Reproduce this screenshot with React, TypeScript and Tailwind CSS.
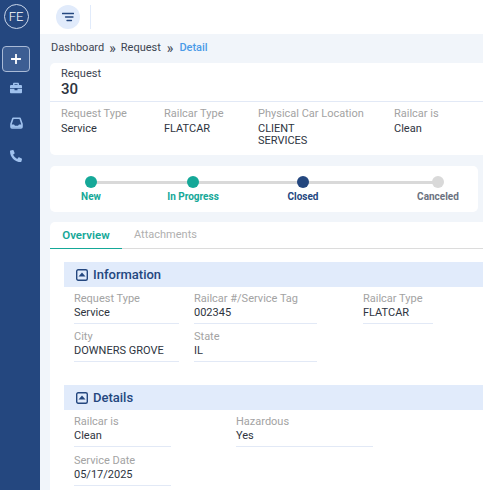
import React from 'react';
import { FaBriefcase, FaPhoneAlt } from 'react-icons/fa';

const font = { fontFamily: 'Roboto, sans-serif' };

const CollapseIcon = () => (
  <svg width="12" height="12" viewBox="0 0 12 12" className="shrink-0">
    <rect x="0.7" y="0.7" width="10.6" height="10.6" rx="1.5" fill="none" stroke="#24477f" strokeWidth="1.4" />
    <path d="M2.5 7.6 L6 3.4 L9.5 7.6 Z" fill="#24477f" />
  </svg>
);

const InboxIcon = () => (
  <svg width="13" height="12" viewBox="0 0 13 12" className="mt-[23px] shrink-0">
    <path d="M3 1.2 H10 L12 7 V10 Q12 11 11 11 H2 Q1 11 1 10 V7 Z" fill="none" stroke="#9fc1ee" strokeWidth="1.6" strokeLinejoin="round" />
    <path d="M1 7.4 H4 L5 8.8 H8 L9 7.4 H12 V10.6 H1 Z" fill="#9fc1ee" />
  </svg>
);

const Field = ({ label, value, className }: { label: string; value: string; className: string }) => (
  <div className={`border-b border-[#e2e9f6] ${className}`}>
    <div className="text-[11px] leading-[13px] text-[#a3a3a3] whitespace-nowrap">{label}</div>
    <div className="text-[11px] leading-[15px] text-[#2e3440] whitespace-nowrap">{value}</div>
  </div>
);

const SummaryField = ({ label, children, className }: { label: string; children: React.ReactNode; className: string }) => (
  <div className={className}>
    <div className="text-[11px] leading-[14px] text-[#a3a3a3] whitespace-nowrap">{label}</div>
    <div className="text-[11px] leading-[12px] mt-[2px] text-[#2e3440]">{children}</div>
  </div>
);

const SectionBar = ({ title }: { title: string }) => (
  <div className="h-[25px] bg-[#e1ebfb] pl-[12px] flex items-center gap-[5px]">
    <CollapseIcon />
    <span className="text-[13px] font-medium text-[#24477f]">{title}</span>
  </div>
);

const steps = [
  { label: 'New', dot: 'bg-[#15a898]', text: 'text-[#15a898]', gap: 'ml-0' },
  { label: 'In Progress', dot: 'bg-[#15a898]', text: 'text-[#15a898]', gap: 'ml-[62px]' },
  { label: 'Closed', dot: 'bg-[#24477f]', text: 'text-[#24477f]', gap: 'ml-[70px]' },
  { label: 'Canceled', dot: 'bg-[#d9d9d9]', text: 'text-[#6b7280]', gap: 'ml-[95px]' },
];

export default function App() {
  return (
    <div className="w-[483px] h-[490px] overflow-hidden flex bg-[#f1f5fa]" style={font}>
      {/* Sidebar */}
      <aside className="w-[40px] shrink-0 bg-[#24477f] flex flex-col items-center pt-[4px] pr-[8px]">
        <div className="w-[25px] h-[25px] shrink-0 rounded-full border border-[#c9d6ea] text-white text-[13px] font-light flex items-center justify-center">FE</div>
        <div className="mt-[17px] w-[28px] h-[26px] shrink-0 rounded-[4px] border border-[#a9bad6] bg-[#3d5e93] flex items-center justify-center">
          <svg width="10" height="10" viewBox="0 0 10 10"><path d="M5 0.5 V9.5 M0.5 5 H9.5" stroke="#fff" strokeWidth="1.8" strokeLinecap="round" /></svg>
        </div>
        <FaBriefcase className="mt-[10px] text-[#9fc1ee]" size={12} />
        <InboxIcon />
        <FaPhoneAlt className="mt-[21px] text-[#9fc1ee]" size={12} />
      </aside>

      <main className="flex-1 min-w-0 flex flex-col">
        {/* Top bar */}
        <header className="h-[34px] shrink-0 bg-white flex items-center pl-[16px]">
          <div className="w-[24px] h-[24px] rounded-full bg-[#e1ebfb] flex items-center justify-center">
            <svg width="12" height="10" viewBox="0 0 12 10"><path d="M0.5 1.5 H11.5 M3.5 5 H11 M5 8.5 H9.5" stroke="#24477f" strokeWidth="1.3" strokeLinecap="round" /></svg>
          </div>
          <div className="ml-[10px] w-px h-[24px] bg-[#e1ebfb]" />
        </header>

        {/* Breadcrumb */}
        <nav className="h-[29px] shrink-0 pl-[11px] flex items-center gap-[5px] text-[11px] text-[#3d4552]">
          <span>Dashboard</span>
          <span className="text-[14px] leading-none -translate-y-[1px]">»</span>
          <span>Request</span>
          <span className="ml-[1px] text-[14px] leading-none -translate-y-[1px]">»</span>
          <span className="ml-[1px] font-medium text-[#4a9be8]">Detail</span>
        </nav>

        {/* Request summary */}
        <section className="ml-[10px] h-[92px] shrink-0 bg-white rounded-l-[5px]">
          <div className="h-[39px] pl-[11px] pt-[4px] border-b border-[#e2e9f6]">
            <div className="text-[11px] leading-[13px] text-[#3d4552]">Request</div>
            <div className="text-[15px] leading-[18px] font-medium text-[#2e3440]">30</div>
          </div>
          <div className="flex pl-[11px] pt-[5px]">
            <SummaryField label="Request Type" className="w-[103px]">Service</SummaryField>
            <SummaryField label="Railcar Type" className="w-[94px]">FLATCAR</SummaryField>
            <SummaryField label="Physical Car Location" className="w-[136px]">
              <div>CLIENT</div>
              <div>SERVICES</div>
            </SummaryField>
            <SummaryField label="Railcar is" className="w-[60px]">Clean</SummaryField>
          </div>
        </section>

        {/* Status stepper */}
        <section className="ml-[10px] mr-[5px] mt-[11px] h-[46px] shrink-0 bg-white rounded-[5px] flex relative pl-[21px] pt-[10px]">
          <div className="absolute left-[41px] top-[15px] w-[347px] h-[3px] bg-[#d9d9d9]" />
          {steps.map((s) => (
            <div key={s.label} className={`w-[40px] relative flex flex-col items-center ${s.gap}`}>
              <div className={`w-[12px] h-[12px] rounded-full ${s.dot}`} />
              <span className={`mt-[3px] text-[10px] leading-[12px] font-bold whitespace-nowrap ${s.text}`}>{s.label}</span>
            </div>
          ))}
        </section>

        {/* Detail card */}
        <section className="ml-[10px] mt-[10px] flex-1 bg-white rounded-tl-[5px]">
          <div className="h-[27px] flex border-b border-[#dcdcdc]">
            <div className="w-[72px] h-[27px] border-b border-[#15a898] text-center text-[11.5px] leading-[26px] font-semibold text-[#15a898]">Overview</div>
            <div className="ml-[12px] text-[11px] leading-[26px] text-[#b0b0b0]">Attachments</div>
          </div>

          <div className="pl-[14px] pt-[13px]">
            <SectionBar title="Information" />
            <div className="pl-[10px] pt-[5px]">
              <div className="flex">
                <Field label="Request Type" value="Service" className="w-[105px] pb-[3px]" />
                <Field label="Railcar #/Service Tag" value="002345" className="w-[123px] ml-[15px] pb-[3px]" />
                <Field label="Railcar Type" value="FLATCAR" className="w-[70px] ml-[46px] pb-[3px]" />
              </div>
              <div className="flex mt-[6px]">
                <Field label="City" value="DOWNERS GROVE" className="w-[105px] pb-[3px]" />
                <Field label="State" value="IL" className="w-[123px] ml-[15px] pb-[3px]" />
              </div>
            </div>

            <div className="mt-[23px]">
              <SectionBar title="Details" />
            </div>
            <div className="pl-[10px] pt-[5px]">
              <div className="flex">
                <Field label="Railcar is" value="Clean" className="w-[97px] pb-[3px]" />
                <Field label="Hazardous" value="Yes" className="w-[137px] ml-[65px] pb-[3px]" />
              </div>
              <div className="mt-[7px]">
                <Field label="Service Date" value="05/17/2025" className="w-[97px] pb-[3px]" />
              </div>
            </div>
          </div>
        </section>
      </main>
    </div>
  );
}
